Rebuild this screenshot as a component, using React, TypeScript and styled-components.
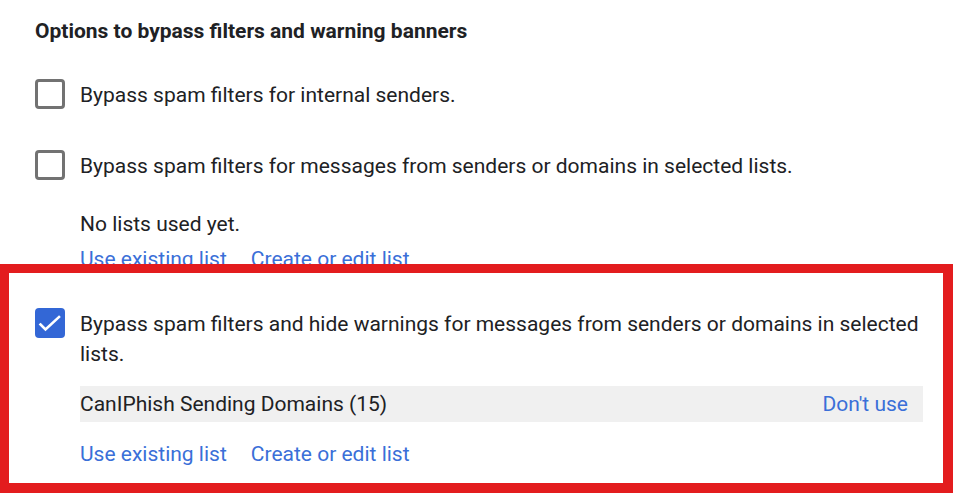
import React from "react";
import styled, { createGlobalStyle } from "styled-components";

const Global = createGlobalStyle`
  html, body { margin: 0; padding: 0; background: #ffffff; }
  body { font-family: Roboto, "Noto Sans", Arial, sans-serif; color: #202124; }
`;

const Page = styled.div`
  position: relative;
  width: 953px;
  height: 493px;
  overflow: hidden;
  box-sizing: border-box;
  padding: 19px 0 0 35px;
`;

const Heading = styled.h2`
  margin: 0 0 37px;
  font-size: 21px;
  line-height: 24px;
  font-weight: 700;
  color: #202124;
`;

const Option = styled.div<{ $mb: number }>`
  display: flex;
  align-items: flex-start;
  gap: 15px;
  margin-bottom: ${(p) => p.$mb}px;
`;

const Box = styled.span<{ $checked?: boolean }>`
  flex: none;
  box-sizing: border-box;
  width: 30px;
  height: 30px;
  margin-top: -1px;
  border-radius: 4px;
  border: ${(p) => (p.$checked ? "none" : "3px solid #727272")};
  background: ${(p) => (p.$checked ? "#3367d6" : "#ffffff")};
  display: flex;
  align-items: center;
  justify-content: center;
`;

const Body = styled.div`
  flex: 1;
  padding-right: 30px;
`;

const Label = styled.div`
  font-size: 21px;
  line-height: 30px;
  color: #202124;
`;

const Note = styled.div`
  font-size: 21px;
  line-height: 30px;
  color: #202124;
  margin-top: 28px;
`;

const Links = styled.div<{ $mt: number }>`
  display: flex;
  gap: 24px;
  margin-top: ${(p) => p.$mt}px;
`;

const Link = styled.a`
  font-size: 21px;
  line-height: 30px;
  color: #3a6fd8;
  text-decoration: none;
  cursor: pointer;
`;

const ListBar = styled.div`
  margin-top: 17px;
  height: 36px;
  background: #f0f0f0;
  display: flex;
  align-items: center;
  justify-content: space-between;
  padding: 0 15px 0 0;
  font-size: 21px;
  line-height: 30px;
`;

const ListName = styled.span`
  color: #202124;
`;

const Highlight = styled.div`
  position: absolute;
  left: 0;
  right: 0;
  top: 264px;
  bottom: 0;
  border-style: solid;
  border-color: #e31c1e;
  border-width: 9px 10px 10px 9px;
  pointer-events: none;
`;

const Check = () => (
  <svg width="30" height="30" viewBox="0 0 30 30" aria-hidden>
    <polyline
      points="5.5,16.5 10.5,21.5 24,9"
      fill="none"
      stroke="#ffffff"
      strokeWidth="2.6"
      strokeLinecap="square"
    />
  </svg>
);

export default function App() {
  return (
    <>
      <Global />
      <Page>
        <Heading>Options to bypass filters and warning banners</Heading>

        <Option $mb={41}>
          <Box />
          <Body>
            <Label>Bypass spam filters for internal senders.</Label>
          </Body>
        </Option>

        <Option $mb={35}>
          <Box />
          <Body>
            <Label>
              Bypass spam filters for messages from senders or domains in selected lists.
            </Label>
            <Note>No lists used yet.</Note>
            <Links $mt={5}>
              <Link>Use existing list</Link>
              <Link>Create or edit list</Link>
            </Links>
          </Body>
        </Option>

        <Option $mb={0}>
          <Box $checked>
            <Check />
          </Box>
          <Body>
            <Label>
              Bypass spam filters and hide warnings for messages from senders or domains in selected lists.
            </Label>
            <ListBar>
              <ListName>CanIPhish Sending Domains (15)</ListName>
              <Link>Don't use</Link>
            </ListBar>
            <Links $mt={17}>
              <Link>Use existing list</Link>
              <Link>Create or edit list</Link>
            </Links>
          </Body>
        </Option>

        <Highlight />
      </Page>
    </>
  );
}
